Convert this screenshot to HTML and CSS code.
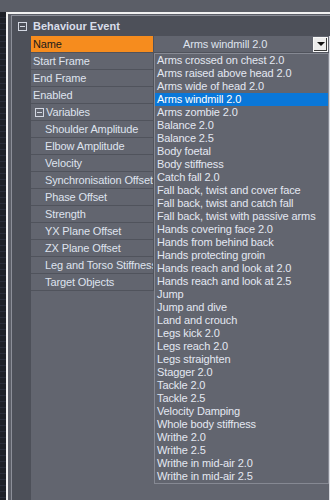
FILE: index.html
```html
<!DOCTYPE html>
<html lang="en">
<head>
    <meta charset="UTF-8">
    <meta name="viewport" content="width=device-width, initial-scale=1.0">
    <title>Behaviour Event</title>
    <link rel="stylesheet" href="styles.css">
</head>
<body>
    <div class="topbar"></div>
    <div class="frame">
        <div class="desk"></div>
        <div class="window">
            <div class="grid">
                <div class="category">
                    <span class="toggle"></span>
                    <span class="category-title">Behaviour Event</span>
                </div>
                <div class="grid-body">
                    <div class="gutter"></div>
                    <div class="table">
                        <div class="row selected">
                            <div class="label">Name</div>
                            <div class="value">
                                <span class="value-text">Arms windmill 2.0</span>
                                <span class="drop-btn"><span class="arrow"></span></span>
                            </div>
                        </div>
                        <div class="row"><div class="label">Start Frame</div><div class="value"></div></div>
                        <div class="row"><div class="label">End Frame</div><div class="value"></div></div>
                        <div class="row"><div class="label">Enabled</div><div class="value"></div></div>
                        <div class="row">
                            <div class="label label-group"><span class="toggle small"></span>Variables</div>
                            <div class="value"></div>
                        </div>
                        <div class="row"><div class="label sub">Shoulder Amplitude</div><div class="value"></div></div>
                        <div class="row"><div class="label sub">Elbow Amplitude</div><div class="value"></div></div>
                        <div class="row"><div class="label sub">Velocity</div><div class="value"></div></div>
                        <div class="row"><div class="label sub">Synchronisation Offset</div><div class="value"></div></div>
                        <div class="row"><div class="label sub">Phase Offset</div><div class="value"></div></div>
                        <div class="row"><div class="label sub">Strength</div><div class="value"></div></div>
                        <div class="row"><div class="label sub">YX Plane Offset</div><div class="value"></div></div>
                        <div class="row"><div class="label sub">ZX Plane Offset</div><div class="value"></div></div>
                        <div class="row"><div class="label sub">Leg and Torso Stiffness</div><div class="value"></div></div>
                        <div class="row"><div class="label sub">Target Objects</div><div class="value"></div></div>
                    </div>
                </div>
            </div>
        </div>
    </div>

    <ul class="dropdown">
        <li>Arms crossed on chest 2.0</li>
        <li>Arms raised above head 2.0</li>
        <li>Arms wide of head 2.0</li>
        <li class="active">Arms windmill 2.0</li>
        <li>Arms zombie 2.0</li>
        <li>Balance 2.0</li>
        <li>Balance 2.5</li>
        <li>Body foetal</li>
        <li>Body stiffness</li>
        <li>Catch fall 2.0</li>
        <li>Fall back, twist and cover face</li>
        <li>Fall back, twist and catch fall</li>
        <li>Fall back, twist with passive arms</li>
        <li>Hands covering face 2.0</li>
        <li>Hands from behind back</li>
        <li>Hands protecting groin</li>
        <li>Hands reach and look at 2.0</li>
        <li>Hands reach and look at 2.5</li>
        <li>Jump</li>
        <li>Jump and dive</li>
        <li>Land and crouch</li>
        <li>Legs kick 2.0</li>
        <li>Legs reach 2.0</li>
        <li>Legs straighten</li>
        <li>Stagger 2.0</li>
        <li>Tackle 2.0</li>
        <li>Tackle 2.5</li>
        <li>Velocity Damping</li>
        <li>Whole body stiffness</li>
        <li>Writhe 2.0</li>
        <li>Writhe 2.5</li>
        <li>Writhe in mid-air 2.0</li>
        <li>Writhe in mid-air 2.5</li>
    </ul>
</body>
</html>
```

FILE: styles.css
```css
body {
    margin: 0;
    width: 330px;
    height: 500px;
    overflow: hidden;
    position: relative;
    background: #5b5e67;
    font-family: "Liberation Sans", Arial, sans-serif;
    font-size: 11px;
    letter-spacing: -0.12px;
    color: #dfe3ee;
}

.topbar {
    height: 12px;
    background: #5b5e67;
}

.frame {
    display: flex;
    height: 488px;
}

.desk {
    width: 6px;
    background: repeating-linear-gradient(to bottom, #1d2027 0, #1d2027 5px, #2a2e3a 5px, #2a2e3a 6px);
}

.window {
    flex: 1;
    display: flex;
    border-top: 2px solid #f2f2f2;
    border-left: 2px solid #f2f2f2;
    padding: 1px 0 0 3px;
    background: #5b5e67;
}

.grid {
    flex: 1;
    display: flex;
    flex-direction: column;
    border-top: 1px solid #8c8f99;
    border-left: 1px solid #8c8f99;
    background: #4d5059;
}

.category {
    display: flex;
    align-items: center;
    height: 20px;
    padding-left: 6px;
}

.toggle {
    box-sizing: border-box;
    width: 9px;
    height: 9px;
    border: 1px solid #d4d8e2;
    position: relative;
    margin-right: 6px;
}

.toggle::after {
    content: "";
    position: absolute;
    left: 1px;
    right: 1px;
    top: 3px;
    height: 1px;
    background: #d4d8e2;
}

.toggle.small {
    margin: 0 2px 0 2px;
}

.category-title {
    font-weight: bold;
    letter-spacing: 0;
    color: #d9deea;
}

.grid-body {
    flex: 1;
    display: flex;
}

.gutter {
    width: 19px;
    background: #4d5059;
}

.table {
    flex: 1;
    background: #62656f;
    border-right: 1px solid #d8dae0;
}

.row {
    display: flex;
    height: 16px;
    border-bottom: 1px solid #50535c;
}

.label {
    width: 120px;
    padding-left: 2px;
    line-height: 16px;
    white-space: nowrap;
    overflow: hidden;
    border-right: 1px solid #50535c;
}

.label-group {
    display: flex;
    align-items: center;
}

.label.sub {
    padding-left: 14px;
    width: 108px;
}

.value {
    flex: 1;
    display: flex;
    align-items: center;
    line-height: 16px;
}

.selected .label {
    background: #f68c1e;
    color: #1b1b1b;
}

.value-text {
    flex: 1;
    padding-left: 29px;
}

.drop-btn {
    box-sizing: border-box;
    width: 15px;
    height: 15px;
    margin-right: 1px;
    background: #ececec;
    border: 1px solid #f8f8f8;
    box-shadow: inset -1px -1px 0 #3a3a3a;
    display: flex;
    align-items: center;
    justify-content: center;
}

.arrow {
    width: 0;
    height: 0;
    border-left: 4px solid transparent;
    border-right: 4px solid transparent;
    border-top: 4px solid #111;
}

.dropdown {
    position: absolute;
    left: 154px;
    top: 53px;
    width: 173px;
    margin: 0;
    padding: 0;
    list-style: none;
    background: #62656f;
    border: 1px solid #868993;
    color: #e4e8f2;
}

.dropdown li {
    height: 13px;
    line-height: 13px;
    padding-left: 2px;
    white-space: nowrap;
}

.dropdown li.active {
    background: #0a77d8;
    color: #ffffff;
}
```
